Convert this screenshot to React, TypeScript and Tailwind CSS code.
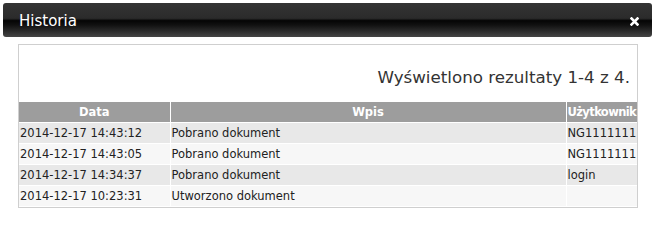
import React from 'react';

const rows = [
  { date: '2014-12-17 14:43:12', entry: 'Pobrano dokument', user: 'NG1111111' },
  { date: '2014-12-17 14:43:05', entry: 'Pobrano dokument', user: 'NG1111111' },
  { date: '2014-12-17 14:34:37', entry: 'Pobrano dokument', user: 'login' },
  { date: '2014-12-17 10:23:31', entry: 'Utworzono dokument', user: '' },
];

export default function App() {
  return (
    <div className="w-[656px] h-[218px] bg-white pt-[3px] font-['DejaVu_Sans',Verdana,sans-serif]">
      {/* Title bar */}
      <div className="ml-[3px] w-[649px] h-[34px] rounded-[3px] flex items-center justify-between pl-[16px] pr-[13px] bg-[linear-gradient(to_bottom,#343434_0%,#2b2b2b_45%,#050505_52%,#111_65%,#454545_100%)]">
        <span className="text-white text-[15px] leading-none mt-[3px]">Historia</span>
        <svg width="9" height="9" viewBox="0 0 9 9" className="mt-[2px]">
          <path d="M1.5 1.5 L7.5 7.5 M7.5 1.5 L1.5 7.5" stroke="#fff" strokeWidth="2.6" strokeLinecap="square" />
        </svg>
      </div>

      {/* Content */}
      <div className="ml-[18px] mt-[7px] w-[620px] h-[164px] border border-[#cfcfcf]">
        <div className="h-[57px] flex items-center justify-end pr-[7px] pt-[8px]">
          <span className="text-[16.7px] text-[#333]">Wyświetlono rezultaty 1-4 z 4.</span>
        </div>
        <table className="w-[618px] table-fixed border-collapse text-[11.5px] leading-none">
          <colgroup>
            <col className="w-[151px]" />
            <col className="w-[396px]" />
            <col className="w-[71px]" />
          </colgroup>
          <thead>
            <tr className="h-[20px] bg-[#9d9d9d] text-white">
              <th className="font-bold text-center border-r border-white pt-[1px]">Data</th>
              <th className="font-bold text-center border-r border-white pt-[1px]">Wpis</th>
              <th className="font-bold text-left pl-[1px] pt-[1px] whitespace-nowrap overflow-hidden tracking-[-0.6px]">Użytkownik</th>
            </tr>
          </thead>
          <tbody>
            {rows.map((r, i) => (
              <tr key={i} className={`h-[21px] text-[#222] border-t border-white ${i % 2 === 0 ? 'bg-[#e8e8e8]' : 'bg-[#f7f7f7]'}`}>
                <td className="pl-[1px] pt-[2px] border-r border-white whitespace-nowrap">{r.date}</td>
                <td className="pl-[1px] pt-[2px] border-r border-white whitespace-nowrap">{r.entry}</td>
                <td className="pl-[1px] pt-[2px] whitespace-nowrap overflow-hidden">{r.user}</td>
              </tr>
            ))}
          </tbody>
        </table>
      </div>
    </div>
  );
}
